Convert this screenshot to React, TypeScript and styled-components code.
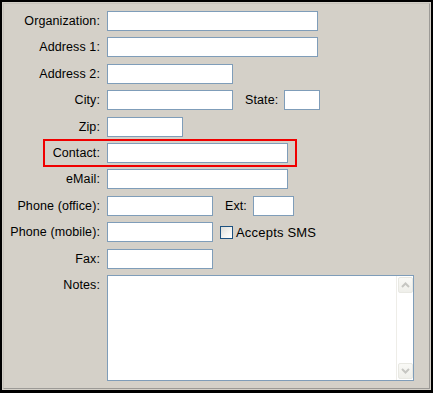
import React from 'react';
import styled, { createGlobalStyle } from 'styled-components';

const GlobalStyle = createGlobalStyle`
  html, body {
    margin: 0;
    padding: 0;
    background: #000;
  }
  * {
    box-sizing: border-box;
  }
`;

const Frame = styled.div`
  width: 433px;
  height: 393px;
  padding: 2px 2px 3px 2px;
  background: #000;
  font-family: 'Liberation Sans', Arial, sans-serif;
`;

const Surface = styled.div`
  height: 100%;
  background: #d4d0c8;
  padding: 1px;
`;

const Panel = styled.div`
  height: 100%;
  border-top: 1px solid #c8c4bc;
  border-left: 1px solid #c8c4bc;
  border-right: 1px solid #9c9a96;
  border-bottom: 1px solid #9c9a96;
  padding: 7px 0 0 4px;
  display: flex;
  flex-direction: column;
  gap: 6.4px;
`;

const Row = styled.div<{ $top?: boolean }>`
  position: relative;
  display: flex;
  align-items: ${(p) => (p.$top ? 'flex-start' : 'center')};
  min-height: 20px;
`;

const Label = styled.label<{ $inline?: boolean }>`
  width: ${(p) => (p.$inline ? 'auto' : '92px')};
  flex: none;
  margin: ${(p) => (p.$inline ? '0 6px 0 12px' : '0 7px 0 0')};
  text-align: right;
  font-size: 12.5px;
  letter-spacing: 0.1px;
  color: #000;
  white-space: nowrap;
`;

const NotesLabel = styled(Label)`
  padding-top: 3px;
`;

const Input = styled.input<{ $w: number }>`
  width: ${(p) => p.$w}px;
  height: 20px;
  flex: none;
  border: 1px solid #7f9db9;
  background: #fff;
  padding: 0 3px;
  font: 12px 'Liberation Sans', Arial, sans-serif;
  outline: none;
`;

const CheckWrap = styled.label`
  display: flex;
  align-items: center;
  margin-left: 7px;
  font-size: 13px;
  letter-spacing: 0.2px;
  color: #000;
`;

const CheckBox = styled.span`
  width: 13px;
  height: 13px;
  margin-right: 3px;
  border: 1px solid #1c5180;
  background: linear-gradient(135deg, #dcdcd7 0%, #f4f4f2 60%, #ffffff 100%);
`;

const NotesBox = styled.div`
  width: 307px;
  height: 106px;
  display: flex;
  border: 1px solid #7f9db9;
  background: #fff;
`;

const NotesArea = styled.textarea`
  flex: 1;
  border: none;
  resize: none;
  outline: none;
  padding: 2px 3px;
  font: 12px 'Liberation Sans', Arial, sans-serif;
`;

const ScrollBar = styled.div`
  width: 17px;
  display: flex;
  flex-direction: column;
  justify-content: space-between;
  align-items: center;
  padding: 1px 0 1px 1px;
  border-left: 1px solid #eeede8;
  background: #fff;
`;

const ScrollButton = styled.div`
  width: 15px;
  height: 16px;
  display: flex;
  align-items: center;
  justify-content: center;
  border: 1px solid #e8e8e2;
  border-radius: 2px;
  background: linear-gradient(180deg, #f9f9f6 0%, #efefea 100%);
`;

const Highlight = styled.div`
  position: absolute;
  left: 35px;
  top: -4px;
  width: 254px;
  height: 28px;
  border: 2px solid #f00000;
  pointer-events: none;
`;

const Chevron = ({ up }: { up?: boolean }) => (
  <svg width="9" height="6" viewBox="0 0 9 6">
    <path
      d={up ? 'M1 5 L4.5 1.5 L8 5' : 'M1 1 L4.5 4.5 L8 1'}
      fill="none"
      stroke="#c6c6c2"
      strokeWidth="2"
    />
  </svg>
);

export default function App() {
  return (
    <Frame>
      <GlobalStyle />
      <Surface>
        <Panel>
          <Row>
            <Label>Organization:</Label>
            <Input $w={211} />
          </Row>
          <Row>
            <Label>Address 1:</Label>
            <Input $w={211} />
          </Row>
          <Row>
            <Label>Address 2:</Label>
            <Input $w={126} />
          </Row>
          <Row>
            <Label>City:</Label>
            <Input $w={126} />
            <Label $inline>State:</Label>
            <Input $w={36} />
          </Row>
          <Row>
            <Label>Zip:</Label>
            <Input $w={76} />
          </Row>
          <Row>
            <Highlight />
            <Label>Contact:</Label>
            <Input $w={181} />
          </Row>
          <Row>
            <Label>eMail:</Label>
            <Input $w={181} />
          </Row>
          <Row>
            <Label>Phone (office):</Label>
            <Input $w={106} />
            <Label $inline>Ext:</Label>
            <Input $w={41} />
          </Row>
          <Row>
            <Label>Phone (mobile):</Label>
            <Input $w={106} />
            <CheckWrap>
              <CheckBox />
              Accepts SMS
            </CheckWrap>
          </Row>
          <Row>
            <Label>Fax:</Label>
            <Input $w={106} />
          </Row>
          <Row $top>
            <NotesLabel>Notes:</NotesLabel>
            <NotesBox>
              <NotesArea />
              <ScrollBar>
                <ScrollButton>
                  <Chevron up />
                </ScrollButton>
                <ScrollButton>
                  <Chevron />
                </ScrollButton>
              </ScrollBar>
            </NotesBox>
          </Row>
        </Panel>
      </Surface>
    </Frame>
  );
}
